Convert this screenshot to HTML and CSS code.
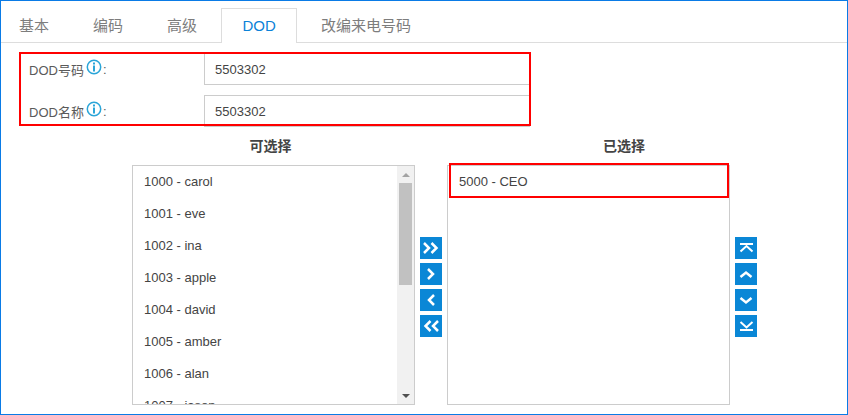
FILE: index.html
```html
<!DOCTYPE html>
<html lang="zh">
<head>
<meta charset="utf-8">
<title>DOD</title>
<link rel="stylesheet" href="styles.css">
</head>
<body>
<svg class="defs" width="0" height="0" aria-hidden="true">
  <defs>
    <symbol id="i-dbl-right" viewBox="0 0 22 22"><path d="M4 6l5 5-5 5M11.500 6l5 5-5 5"/></symbol>
    <symbol id="i-right" viewBox="0 0 22 22"><path d="M8 6l5 5-5 5"/></symbol>
    <symbol id="i-left" viewBox="0 0 22 22"><path d="M14 6l-5 5 5 5"/></symbol>
    <symbol id="i-dbl-left" viewBox="0 0 22 22"><path d="M10.500 6l-5 5 5 5M18 6l-5 5 5 5"/></symbol>
    <symbol id="i-top" viewBox="0 0 22 22"><path class="thin" d="M5 7h13M5.500 14.500l6-5.500 6 5.500"/></symbol>
    <symbol id="i-up" viewBox="0 0 22 22"><path d="M5.500 14l5.500-4.500 5.500 4.500"/></symbol>
    <symbol id="i-down" viewBox="0 0 22 22"><path d="M5.500 9l5.500 4.500 5.500-4.500"/></symbol>
    <symbol id="i-bottom" viewBox="0 0 22 22"><path class="thin" d="M5.500 7l6 5.500 6-5.500M5 15h13"/></symbol>
    <symbol id="i-info" viewBox="0 0 16 16">
      <circle class="info-ring" cx="8" cy="8" r="6.700"/>
      <rect class="info-mark" x="7" y="3.500" width="2" height="2"/>
      <rect class="info-mark" x="7" y="6.500" width="2" height="6"/>
    </symbol>
  </defs>
</svg>
<div class="frame">
  <nav class="tabs">
    <span class="tab">基本</span>
    <span class="tab">编码</span>
    <span class="tab">高级</span>
    <span class="tab tab-active">DOD</span>
    <span class="tab">改编来电号码</span>
  </nav>

  <section class="fields">
    <div class="field">
      <label class="field-label">DOD号码<svg class="info"><use href="#i-info"/></svg>:</label>
      <input class="field-input field-input-first" type="text" value="5503302">
    </div>
    <div class="field">
      <label class="field-label">DOD名称<svg class="info"><use href="#i-info"/></svg>:</label>
      <input class="field-input" type="text" value="5503302">
    </div>
    <div class="highlight"></div>
  </section>

  <section class="transfer">
    <div class="panel">
      <h3 class="panel-title panel-title-left">可选择</h3>
      <div class="listbox">
        <ul class="items">
          <li>1000 - carol</li>
          <li>1001 - eve</li>
          <li>1002 - ina</li>
          <li>1003 - apple</li>
          <li>1004 - david</li>
          <li>1005 - amber</li>
          <li>1006 - alan</li>
          <li>1007 - jason</li>
        </ul>
        <div class="scrollbar">
          <span class="arrow arrow-up"></span>
          <span class="thumb"></span>
          <span class="arrow arrow-down"></span>
        </div>
      </div>
    </div>

    <div class="buttons">
      <span class="btn"><svg><use href="#i-dbl-right"/></svg></span>
      <span class="btn"><svg><use href="#i-right"/></svg></span>
      <span class="btn"><svg><use href="#i-left"/></svg></span>
      <span class="btn"><svg><use href="#i-dbl-left"/></svg></span>
    </div>

    <div class="panel">
      <h3 class="panel-title panel-title-right">已选择</h3>
      <div class="listbox listbox-open">
        <ul class="items">
          <li>5000 - CEO</li>
        </ul>
        <div class="highlight highlight-item"></div>
      </div>
    </div>

    <div class="buttons">
      <span class="btn"><svg><use href="#i-top"/></svg></span>
      <span class="btn"><svg><use href="#i-up"/></svg></span>
      <span class="btn"><svg><use href="#i-down"/></svg></span>
      <span class="btn"><svg><use href="#i-bottom"/></svg></span>
    </div>
  </section>
</div>
</body>
</html>
```
FILE: styles.css
```css
* { box-sizing: border-box; }
html, body { margin: 0; padding: 0; }
body {
  width: 848px;
  height: 415px;
  overflow: hidden;
  background: #fff;
  font-family: "Liberation Sans", "Noto Sans CJK SC", sans-serif;
  font-size: 13px;
  color: #4a4a4a;
}
.defs { position: absolute; }
.frame {
  width: 848px;
  height: 415px;
  border: 1px solid #0a7be6;
  overflow: hidden;
}
.tabs {
  display: flex;
  height: 42px;
  padding: 7px 0 0 0;
  border-bottom: 1px solid #ddd;
}
.tab {
  height: 35px;
  padding: 0 17px;
  line-height: 33px;
  font-size: 15px;
  color: #7d7d7d;
  border: 1px solid transparent;
  border-bottom: 0;
  margin-right: 8px;
}
.tab-active {
  width: 76px;
  padding: 0;
  text-align: center;
  color: #0a82d8;
  background: #fff;
  border-color: #ddd;
  margin: 0 6px 0 -2px;
}
.fields {
  position: relative;
  display: flex;
  flex-direction: column;
  gap: 10px;
  padding: 10px 0 0 28px;
}
.field {
  display: flex;
  height: 32px;
}
.field-label {
  width: 175px;
  display: flex;
  align-items: center;
  color: #5a5a5a;
}
.info {
  width: 16px;
  height: 16px;
  margin: -5px 1px 0 2px;
}
.info-ring { fill: none; stroke: #2aa5d8; stroke-width: 1.500; }
.info-mark { fill: #2aa5d8; }
.field-input {
  width: 326px;
  height: 32px;
  padding: 0 10px;
  border: 1px solid #ccc;
  outline: 0;
  font: inherit;
  color: #444;
}
.field-input-first {
  padding-top: 1px;
  border-top-width: 0;
}
.highlight {
  position: absolute;
  left: 18px;
  top: 9px;
  width: 512px;
  height: 74px;
  border: 2px solid #f00;
  pointer-events: none;
}
.transfer {
  display: flex;
  padding: 0 0 0 131px;
  margin-top: -1px;
}
.panel { width: 283px; flex: none; }
.panel-title {
  height: 39px;
  margin: 0;
  padding-top: 10px;
  line-height: 20px;
  text-align: center;
  font-size: 14px;
  font-weight: 700;
  color: #444;
}
.panel-title-left { padding-right: 6px; }
.panel-title-right { padding-left: 71px; }
.listbox {
  position: relative;
  display: flex;
  height: 240px;
  border: 1px solid #ccc;
  overflow: hidden;
}
.listbox-open { overflow: visible; }
.items {
  flex: 1;
  margin: 0;
  padding: 0;
  list-style: none;
  overflow: hidden;
}
.items li {
  height: 32px;
  line-height: 32px;
  padding-left: 11px;
  color: #444;
}
.highlight-item {
  left: 1px;
  top: -3px;
  width: 280px;
  height: 35px;
}
.scrollbar {
  width: 17px;
  flex: none;
  display: flex;
  flex-direction: column;
  align-items: center;
  background: #f1f1f1;
}
.arrow {
  width: 0;
  height: 0;
  flex: none;
  border-left: 4px solid transparent;
  border-right: 4px solid transparent;
}
.arrow-up { border-bottom: 4px solid #a3a3a3; margin: 7px 0 6px; }
.thumb { width: 13px; height: 102px; flex: none; background: #c1c1c1; }
.arrow-down { border-top: 4px solid #505050; margin-top: auto; margin-bottom: 6px; }
.buttons {
  flex: none;
  width: 32px;
  display: flex;
  flex-direction: column;
  gap: 4px;
  padding: 111px 0 0 5px;
}
.btn {
  display: block;
  width: 22px;
  height: 22px;
  background: #0a87d6;
}
.btn svg {
  display: block;
  width: 22px;
  height: 22px;
  fill: none;
  stroke: #fff;
  stroke-width: 2.500;
}
.thin { stroke-width: 2; }
```
